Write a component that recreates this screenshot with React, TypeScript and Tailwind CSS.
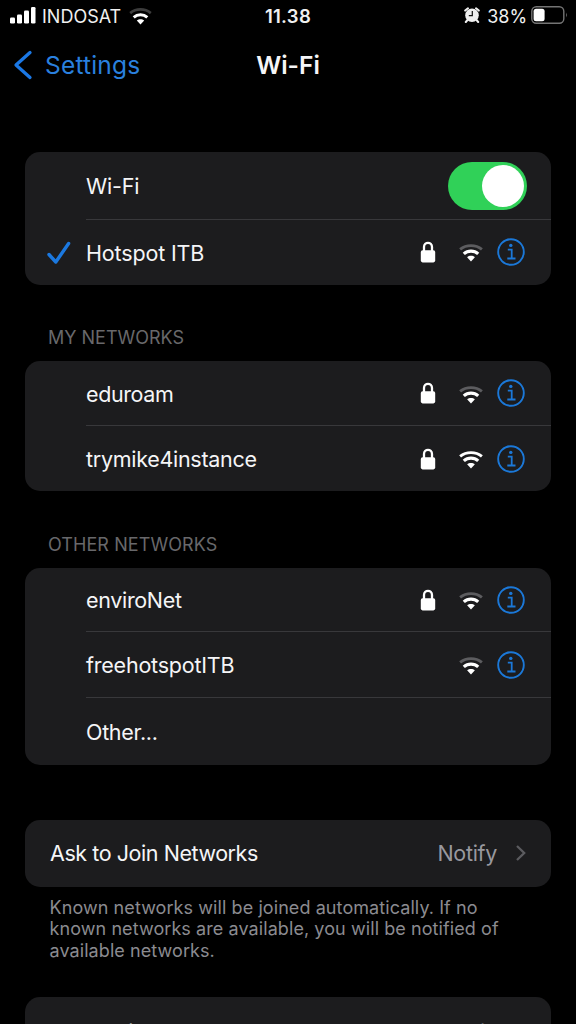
import React from "react";

function WifiIcon({ strong, dim, className }: { strong?: boolean; dim?: boolean; className: string }) {
  return (
    <svg viewBox="0 0 24 18" className={className} fill="none">
      <path d="M1.1 5.4 C7.3 .3 16.7 .3 22.9 5.4" stroke={strong ? "#fff" : dim ? "#3c3c3c" : "#5c5c5f"} strokeWidth="2.9" />
      <path d="M4.8 9.9 C8.9 6.2 15.1 6.2 19.2 9.9" stroke="#fff" strokeWidth="3.2" />
      <path d="M8.1 13.3 C10.3 11.4 13.7 11.4 15.9 13.3 L12 17.6 Z" fill="#fff" />
    </svg>
  );
}

function LockIcon() {
  return (
    <svg viewBox="0 0 16 22" className="h-[22px] w-4" fill="none">
      <path d="M4 10 V6 C4 .6 12 .6 12 6 V10" stroke="#fff" strokeWidth="2.3" />
      <rect x=".8" y="9.2" width="14.4" height="12.2" rx="1.8" fill="#fff" />
    </svg>
  );
}

function InfoIcon() {
  return (
    <svg viewBox="0 0 28 28" className="size-7" fill="none" stroke="#1b78d8">
      <circle cx="14" cy="14" r="12.8" strokeWidth="1.9" />
      <circle cx="13.8" cy="7.4" r="1.7" fill="#1b78d8" stroke="none" />
      <path d="M10.8 11.7 H14.7 V20.4 M10.3 20.5 H18.5" strokeWidth="1.8" />
    </svg>
  );
}

function Check() {
  return (
    <svg viewBox="0 0 24 24" className="h-6 w-6" fill="none">
      <path d="M2 13.5 L8.8 21 L21.6 2.5" stroke="#1b78df" strokeWidth="3.4" strokeLinecap="round" strokeLinejoin="round" />
    </svg>
  );
}

function Chevron() {
  return (
    <svg viewBox="0 0 12 18" className="h-[18px] w-3" fill="none">
      <path d="M2 2 L9.2 9 L2 16" stroke="#5b5b5f" strokeWidth="2.3" />
    </svg>
  );
}

type RowProps = {
  name: string;
  tracking: string;
  height: string;
  divider?: boolean;
  checked?: boolean;
  locked?: boolean;
  strong?: boolean;
  plain?: boolean;
};

function NetworkRow({ name, tracking, height, divider, checked, locked, strong, plain }: RowProps) {
  return (
    <div className={`flex ${height}`}>
      <div className="flex w-[61px] items-center pl-[22px]">{checked && <Check />}</div>
      <div className={`flex flex-1 items-center border-[#38383b] pr-[26px] ${divider ? "border-b" : ""}`}>
        <span className={`flex-1 whitespace-nowrap pt-[2px] ${tracking}`}>{name}</span>
        {!plain && (
          <div className={`flex items-center ${checked ? "pb-[2px]" : ""}`}>
            {locked && <LockIcon />}
            <WifiIcon strong={strong} className="ml-[22.5px] mt-[3px] h-[18px] w-6" />
            <div className="ml-[14.5px]">
              <InfoIcon />
            </div>
          </div>
        )}
      </div>
    </div>
  );
}

const card = "overflow-hidden rounded-[15px] bg-[#1c1c1e]";
const header = "flex items-center pl-[23px] text-[18px] leading-6 text-[#68686b]";

export default function App() {
  return (
    <div className="h-[1024px] w-[576px] overflow-hidden bg-black font-['Inter','Liberation_Sans',sans-serif] text-[21.5px] text-[#f5f5f7]">
      <div className="grid h-8 grid-cols-3 items-center px-[10px] text-[18px] text-[#f0f0f0]">
        <div className="flex items-center">
          <svg viewBox="0 0 26 17" className="-mt-[2px] h-[17px] w-[26px]" fill="#fff">
            <rect x="0" y="10.5" width="5" height="6" rx="1.3" />
            <rect x="7" y="7.5" width="5" height="9" rx="1.3" />
            <rect x="14" y="3.5" width="5" height="13" rx="1.3" />
            <rect x="21" y="0" width="4.5" height="16.5" rx="1.3" />
          </svg>
          <span className="ml-[6px]">INDOSAT</span>
          <WifiIcon dim className="ml-[8px] h-[17px] w-[23px]" />
        </div>
        <div className="pt-[2px] text-center text-[18.5px] font-semibold tracking-[0.3px]">11.38</div>
        <div className="flex items-center justify-end">
          <svg viewBox="0 0 16 16" className="-mt-[2px] size-4" fill="none">
            <circle cx="8" cy="8.2" r="6.8" fill="#f0f0f0" />
            <path d="M1.2 3.6 L4 1.3 M14.8 3.6 L12 1.3 M3.5 13 L1.8 15 M12.5 13 L14.2 15" stroke="#f0f0f0" strokeWidth="2" strokeLinecap="round" />
            <path d="M8.3 4 V8.7 H4.8" stroke="#111" strokeWidth="1.2" />
          </svg>
          <span className="ml-[7px] tracking-[-0.1px]">38%</span>
          <svg viewBox="0 0 37 18" className="-mr-[2px] -mt-[2px] ml-[4px] h-[18px] w-[37px]">
            <rect x=".8" y=".8" width="32" height="16.4" rx="4.5" fill="none" stroke="#747474" strokeWidth="1.4" />
            <rect x="2.6" y="2.8" width="11" height="12.4" rx="2.5" fill="#fff" />
            <path d="M35 6.5 Q36.8 9 35 11.5Z" fill="#747474" />
          </svg>
        </div>
      </div>

      <div className="grid h-[66px] grid-cols-3 items-center px-[13px] text-[24px]">
        <div className="flex items-center text-[#2a80df]">
          <svg viewBox="0 0 20 30" className="h-[30px] w-5" fill="none">
            <path d="M17 2.5 L3 15 L17 27.5" stroke="#1b78e5" strokeWidth="3.3" strokeLinecap="round" strokeLinejoin="round" />
          </svg>
          <span className="ml-3 text-[24.5px] tracking-[0.2px]">Settings</span>
        </div>
        <div className="text-center text-[24.5px] font-semibold">Wi-Fi</div>
      </div>

      <main className="px-[25px] pt-[54px]">
        <section className={card}>
          <div className="flex h-[68px] pl-[61px]">
            <div className="flex flex-1 items-center justify-between border-b border-[#38383b] pr-6">
              <span className="pt-px tracking-[-0.2px]">Wi-Fi</span>
              <div className="flex h-12 w-[79px] items-center justify-end rounded-full bg-[#30d158] pr-[3px]">
                <div className="size-[42px] rounded-full bg-white" />
              </div>
            </div>
          </div>
          <NetworkRow name="Hotspot ITB" tracking="tracking-[-0.15px]" height="h-[65px]" checked locked />
        </section>

        <h2 className={`${header} mt-[41px]`}>MY NETWORKS</h2>
        <section className={`${card} mt-[11px]`}>
          <NetworkRow name="eduroam" tracking="tracking-[-0.4px]" height="h-[65px]" locked divider />
          <NetworkRow name="trymike4instance" tracking="tracking-[-0.29px]" height="h-[65px]" locked strong />
        </section>

        <h2 className={`${header} mt-[42px] tracking-[0.08px]`}>OTHER NETWORKS</h2>
        <section className={`${card} mt-[11px]`}>
          <NetworkRow name="enviroNet" tracking="tracking-[-0.33px]" height="h-[64px]" locked divider />
          <NetworkRow name="freehotspotITB" tracking="tracking-[-0.22px]" height="h-[66px]" divider />
          <NetworkRow name="Other..." tracking="tracking-[-0.3px]" height="h-[67px]" plain />
        </section>

        <section className={`${card} mt-[54.5px] flex h-[67px] items-center pl-[25px] pr-[24px]`}>
          <span className="flex-1 pt-px tracking-[-0.44px]">Ask to Join Networks</span>
          <span className="mr-[18px] pt-px tracking-[-0.3px] text-[#98989e]">Notify</span>
          <Chevron />
        </section>
        <p className="mt-[10px] pl-[24.5px] text-[18px] leading-[21.5px] tracking-[0.08px] text-[#8b8b90]">
          Known networks will be joined automatically. If no
          <br />
          known networks are available, you will be notified of
          <br />
          available networks.
        </p>

        <section className={`${card} mt-[36px] flex h-[67px] items-center pl-[25px] pr-[24px] pt-[3px]`}>
          <span className="flex-1 tracking-[-0.44px]">Auto-Join Hotspot</span>
          <span className="mr-[18px] tracking-[-0.44px] text-[#98989e]">Ask to Join</span>
          <Chevron />
        </section>
      </main>
    </div>
  );
}
